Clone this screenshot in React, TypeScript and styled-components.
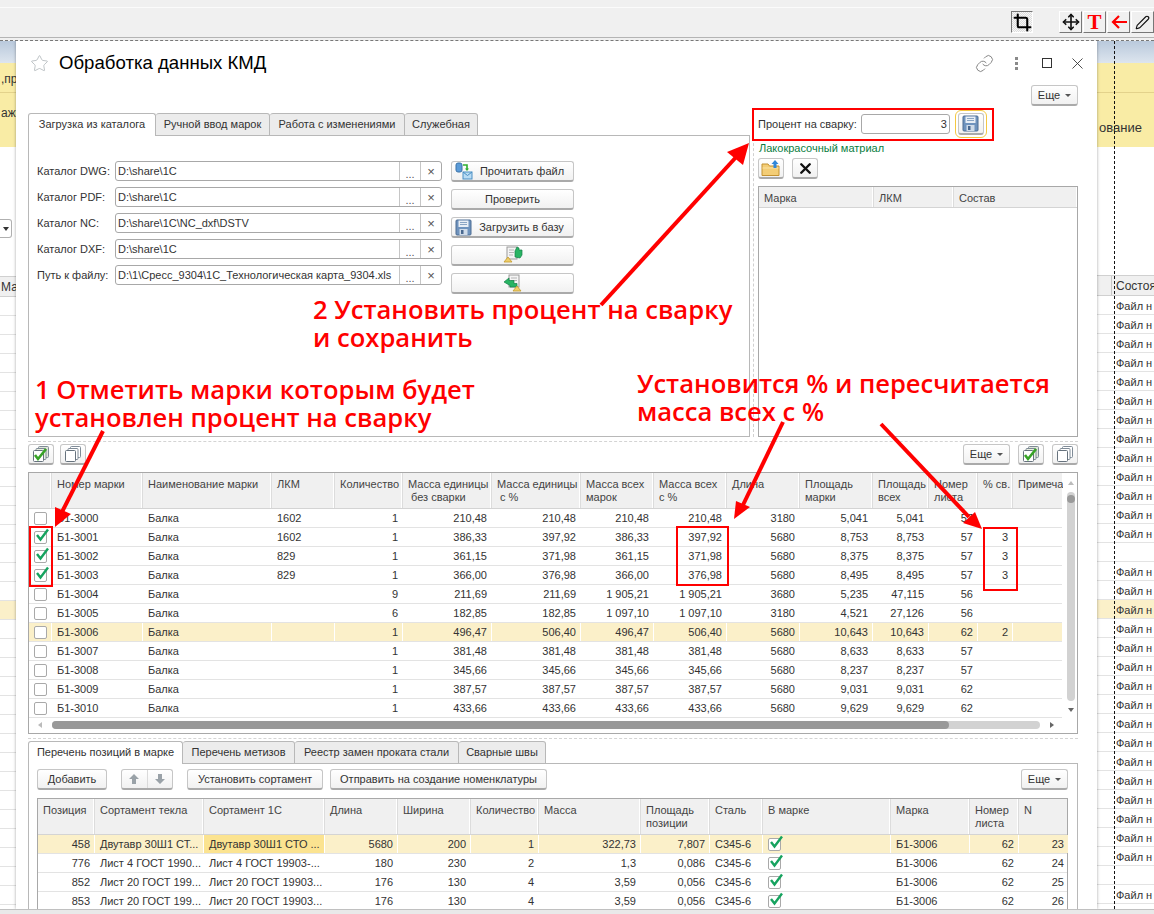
import React from 'react';
import styled, { createGlobalStyle } from 'styled-components';
import { Crop, Link, Move, Pen, Star, X } from 'lucide-react';

const GlobalStyle = createGlobalStyle`
  html, body {
    margin: 0;
    padding: 0;
    background: #fff;
  }
  * {
    box-sizing: border-box;
  }
`;

const MAIN_COLS = [23, 91, 129, 63, 68, 89, 89, 73, 73, 73, 73, 56, 49, 35, 50];
const POS_COLS = [57, 109, 121, 73, 73, 68, 102, 69, 53, 128, 79, 49, 50];
const LACQUER_COLS = [115, 80, 123];

const toTemplate = (cols: number[]) => cols.map(c => `${c}px`).join(' ');

const MAIN_HEAD = [
  '', 'Номер марки', 'Наименование марки', 'ЛКМ', 'Количество',
  'Масса единицы\n\u00a0без сварки', 'Масса единицы\n\u00a0с %', 'Масса всех\nмарок', 'Масса всех\nс %',
  'Длина', 'Площадь\nмарки', 'Площадь\nвсех', 'Номер\nлиста', '% св.', 'Примеча',
];

const POS_HEAD = [
  'Позиция', 'Сортамент текла', 'Сортамент 1С', 'Длина', 'Ширина', 'Количество', 'Масса',
  'Площадь\nпозиции', 'Сталь', 'В марке', 'Марка', 'Номер\nлиста', 'N',
];

type MarkRow = {
  name: string;
  lkm: string;
  qty: string;
  vals: string[];
  len: string;
  area: string;
  areaAll: string;
  sheet: string;
  pct: string;
  checked?: boolean;
  active?: boolean;
};

const mark = (
  name: string, lkm: string, qty: string, vals: string[], len: string,
  area: string, areaAll: string, sheet: string, pct = '', checked = false, active = false,
): MarkRow => ({ name, lkm, qty, vals, len, area, areaAll, sheet, pct, checked, active });

const MARKS: MarkRow[] = [
  mark('Б1-3000', '1602', '1', ['210,48', '210,48', '210,48', '210,48'], '3180', '5,041', '5,041', '57'),
  mark('Б1-3001', '1602', '1', ['386,33', '397,92', '386,33', '397,92'], '5680', '8,753', '8,753', '57', '3', true),
  mark('Б1-3002', '829', '1', ['361,15', '371,98', '361,15', '371,98'], '5680', '8,375', '8,375', '57', '3', true),
  mark('Б1-3003', '829', '1', ['366,00', '376,98', '366,00', '376,98'], '5680', '8,495', '8,495', '57', '3', true),
  mark('Б1-3004', '', '9', ['211,69', '211,69', '1 905,21', '1 905,21'], '3680', '5,235', '47,115', '56'),
  mark('Б1-3005', '', '6', ['182,85', '182,85', '1 097,10', '1 097,10'], '3180', '4,521', '27,126', '56'),
  mark('Б1-3006', '', '1', ['496,47', '506,40', '496,47', '506,40'], '5680', '10,643', '10,643', '62', '2', false, true),
  mark('Б1-3007', '', '1', ['381,48', '381,48', '381,48', '381,48'], '5680', '8,633', '8,633', '57'),
  mark('Б1-3008', '', '1', ['345,66', '345,66', '345,66', '345,66'], '5680', '8,237', '8,237', '57'),
  mark('Б1-3009', '', '1', ['387,57', '387,57', '387,57', '387,57'], '5680', '9,031', '9,031', '62'),
  mark('Б1-3010', '', '1', ['433,66', '433,66', '433,66', '433,66'], '5680', '9,629', '9,629', '62'),
];

const POSITIONS = [
  ['458', 'Двутавр 30Ш1 СТ...', 'Двутавр 30Ш1 СТО ...', '5680', '200', '1', '322,73', '7,807', '23'],
  ['776', 'Лист 4 ГОСТ 1990...', 'Лист 4 ГОСТ 19903-...', '180', '230', '2', '1,3', '0,086', '24'],
  ['852', 'Лист 20 ГОСТ 199...', 'Лист 20 ГОСТ 19903...', '176', '130', '4', '3,59', '0,056', '25'],
  ['853', 'Лист 20 ГОСТ 199...', 'Лист 20 ГОСТ 19903...', '176', '130', '4', '3,59', '0,056', '26'],
];

const FIELDS = [
  ['Каталог DWG:', 'D:\\share\\1C'],
  ['Каталог PDF:', 'D:\\share\\1C'],
  ['Каталог NC:', 'D:\\share\\1C\\NC_dxf\\DSTV'],
  ['Каталог DXF:', 'D:\\share\\1C'],
  ['Путь к файлу:', 'D:\\1\\Срecc_9304\\1C_Технологическая карта_9304.xls'],
];

const FloppyIcon = () => (
  <svg width="17" height="17" viewBox="0 0 17 17">
    <rect x="1" y="1" width="15" height="15" rx="1" fill="#6f93bd" stroke="#4d6c93" />
    <rect x="3.5" y="1.5" width="10" height="6.5" fill="#e8eef5" />
    <path d="M5 3.5h7M5 5.5h7" stroke="#8aa5c4" />
    <rect x="4.5" y="10" width="8" height="6" fill="#cfdbe9" />
    <rect x="6" y="11" width="2.5" height="4" fill="#49688f" />
  </svg>
);

const ReadFileIcon = () => (
  <svg width="18" height="18" viewBox="0 0 18 18">
    <rect x="1" y="1" width="6" height="9" rx="2" fill="#5b9bd8" stroke="#3b73a8" />
    <path d="M8 3h4v4" fill="none" stroke="#2eae2e" strokeWidth="1.6" />
    <path d="M10 6.5h4L12 9z" fill="#2eae2e" />
    <rect x="8" y="10" width="9" height="7" fill="#b9dcf4" stroke="#4a8fc4" />
    <path d="M8 10l4.5 3.5L17 10" fill="none" stroke="#4a8fc4" />
  </svg>
);

const DocUpIcon = () => (
  <svg width="20" height="18" viewBox="0 0 20 18">
    <rect x="4" y="1" width="10" height="12" fill="#f4f4f4" stroke="#9a9a9a" />
    <path d="M6 4h5M6 6.5h5M6 9h4" stroke="#b5b5b5" />
    <path d="M12 11V5l2-4 2 1v2h3v5l-2 3z" fill="#28b463" stroke="#148048" strokeWidth=".7" />
    <path d="M1 16l4-5 4 5z" fill="#f0cf6a" stroke="#c39a2c" strokeWidth=".8" />
  </svg>
);

const DocBackIcon = () => (
  <svg width="20" height="18" viewBox="0 0 20 18">
    <rect x="6" y="1" width="10" height="12" fill="#f4f4f4" stroke="#9a9a9a" />
    <path d="M8 4h6M8 6.5h6" stroke="#b5b5b5" />
    <path d="M1 8l5-4v2.5h5v3h3V13H7v-1.5z" fill="#28b463" stroke="#148048" strokeWidth=".7" />
    <path d="M10 17l4-5 4 5z" fill="#f0cf6a" stroke="#c39a2c" strokeWidth=".8" />
  </svg>
);

const FolderUpIcon = () => (
  <svg width="20" height="18" viewBox="0 0 20 18">
    <path d="M1 5h6l1.5 2H18v9.5H1z" fill="#f3cd76" stroke="#c39233" />
    <path d="M1.5 9h16" stroke="#fae2a4" />
    <path d="M14 1l3.5 4H15.500v4h-3V5H10.500z" fill="#2f86d8" />
  </svg>
);

const PagesIcon = ({ checked }: { checked?: boolean }) => (
  <svg width="18" height="18" viewBox="0 0 18 18">
    <rect x="6.500" y="1.500" width="10" height="11" rx="1" fill={checked ? '#dfe6d8' : '#fff'} stroke="#7f8b97" />
    <rect x="4" y="3.500" width="10" height="11" rx="1" fill={checked ? '#e9efe2' : '#fff'} stroke="#7f8b97" />
    <rect x="1.500" y="5.500" width="10" height="11" rx="1" fill="#fff" stroke="#66727d" />
    {checked && <path d="M3 10l3 4 8-10" fill="none" stroke="#37a326" strokeWidth="2.6" />}
  </svg>
);

const CheckMark = () => (
  <svg width="15" height="14" viewBox="0 0 15 14">
    <path d="M2 7l3.500 4.500L13 1.500" fill="none" stroke="#16a35f" strokeWidth="2.400" />
  </svg>
);

const ArrowGlyph = ({ down }: { down?: boolean }) => (
  <svg width="12" height="12" viewBox="0 0 12 12">
    <path d={down ? 'M4 1h4v5h3l-5 5-5-5h3z' : 'M4 11h4V6h3L6 1 1 6h3z'} fill="#9aa2a8" />
  </svg>
);

const SmallCheck = ({ checked }: { checked?: boolean }) => (
  <CheckBox>{checked && <CheckOverlay><CheckMark /></CheckOverlay>}</CheckBox>
);

const MainTable = () => (
  <Frame $height={262}>
    <BodyWrap>
      <Rows>
        <HeadRow $cols={toTemplate(MAIN_COLS)}>
          {MAIN_HEAD.map((h, i) => <HeadCell key={i}>{h}</HeadCell>)}
        </HeadRow>
        {MARKS.map(row => (
          <DataRow key={row.name} $cols={toTemplate(MAIN_COLS)}>
            <Cell $active={row.active}><SmallCheck checked={row.checked} /></Cell>
            <Cell $active={row.active}>{row.name}</Cell>
            <Cell $active={row.active}>Балка</Cell>
            <Cell $active={row.active}>{row.lkm}</Cell>
            <Cell $active={row.active} $right>{row.qty}</Cell>
            {row.vals.map((v, i) => <Cell key={i} $active={row.active} $right>{v}</Cell>)}
            <Cell $active={row.active} $right>{row.len}</Cell>
            <Cell $active={row.active} $right>{row.area}</Cell>
            <Cell $active={row.active} $right>{row.areaAll}</Cell>
            <Cell $active={row.active} $right>{row.sheet}</Cell>
            <Cell $active={row.active} $right>{row.pct}</Cell>
            <Cell $active={row.active} />
          </DataRow>
        ))}
      </Rows>
      <VScroll>
        <TriUp />
        <VTrack><VDot /></VTrack>
        <TriDown />
      </VScroll>
    </BodyWrap>
    <HScroll>
      <TriLeft />
      <HTrack><HThumb /></HTrack>
      <TriRight />
    </HScroll>
  </Frame>
);

const PositionsTable = () => (
  <Frame>
    <HeadRow $cols={toTemplate(POS_COLS)}>
      {POS_HEAD.map((h, i) => <HeadCell key={i}>{h}</HeadCell>)}
    </HeadRow>
    {POSITIONS.map((p, idx) => {
      const active = idx === 0;
      return (
        <DataRow key={p[0]} $cols={toTemplate(POS_COLS)}>
          <Cell $active={active} $right>{p[0]}</Cell>
          <Cell $active={active}>{p[1]}</Cell>
          <Cell $active={active} $current={active}>{p[2]}</Cell>
          <Cell $active={active} $right>{p[3]}</Cell>
          <Cell $active={active} $right>{p[4]}</Cell>
          <Cell $active={active} $right>{p[5]}</Cell>
          <Cell $active={active} $right>{p[6]}</Cell>
          <Cell $active={active} $right>{p[7]}</Cell>
          <Cell $active={active}>С345-6</Cell>
          <Cell $active={active}><SmallCheck checked /></Cell>
          <Cell $active={active}>Б1-3006</Cell>
          <Cell $active={active} $right>62</Cell>
          <Cell $active={active} $right>{p[8]}</Cell>
        </DataRow>
      );
    })}
  </Frame>
);

const LeftStrip = () => (
  <Strip $width={16}>
    <BlueBand />
    <YellowBand>
      <YellowRow $height={30} $pad={9}><StripText>,пр</StripText></YellowRow>
      <YellowRow $height={54} $pad={13}><StripText>аж</StripText></YellowRow>
    </YellowBand>
    <Gap $height={72} />
    <StubSelect><TriDownDark /></StubSelect>
    <Gap $height={38} />
    <StripHead><StripText>Ма</StripText></StripHead>
    {Array.from({ length: 33 }).map((_, i) => <StripRow key={i} $active={i === 16} />)}
  </Strip>
);

const RightStrip = () => (
  <Strip $width={57}>
    <GuideLine />
    <BlueBand />
    <YellowBand>
      <YellowRow $height={30} $pad={9} />
      <YellowRow $height={54} $pad={27}><StripText $large>ование</StripText></YellowRow>
    </YellowBand>
    <Gap $height={128} />
    <StripHead $cut><StripText>Состоян</StripText></StripHead>
    {Array.from({ length: 33 }).map((_, i) => (
      <StripRow key={i} $active={i === 16} $text>
        {i === 13 || i === 30 ? '' : 'Файл н'}
      </StripRow>
    ))}
  </Strip>
);

const Annotations = () => (
  <>
    <Arrows width="1154" height="914" viewBox="0 0 1154 914">
      <g stroke="#ff0000" strokeWidth="4" fill="none">
        <path d="M601 305L738 155" />
        <path d="M103 431L62 512" />
        <path d="M783 422L743 505" />
        <path d="M881 424L969 517" />
      </g>
      <g fill="#ff0000">
        <path d="M749 143L743 165 727 152z" />
        <path d="M55 527L55 507 71 514z" />
        <path d="M734 519L736 501 750 507z" />
        <path d="M982 529L963 523 975 512z" />
      </g>
    </Arrows>
    <Marker $left={752} $top={108} $width={242} $height={33} />
    <Marker $left={29} $top={526} $width={24} $height={61} />
    <Marker $left={676} $top={526} $width={53} $height={60} />
    <Marker $left={983} $top={527} $width={35} $height={64} />
    <Callout $left={313} $top={296}>2 Установить процент на сварку{'\n'}и сохранить</Callout>
    <Callout $left={35} $top={376}>1 Отметить марки которым будет{'\n'}установлен процент на сварку</Callout>
    <Callout $left={637} $top={370}>Установится % и пересчитается{'\n'}масса всех с %</Callout>
  </>
);

export default function App() {
  return (
    <Page>
      <GlobalStyle />
      <TopBar>
        <TopRule />
        <ToolRow>
          <CropTool><Crop size={19} strokeWidth={2.6} color="#000" /></CropTool>
          <ToolGroup>
            <ToolButton><Move size={18} strokeWidth={2.2} color="#111" /></ToolButton>
            <ToolButton><RedT>T</RedT></ToolButton>
            <ToolButton>
              <svg width="18" height="16" viewBox="0 0 18 16">
                <path d="M17 8H3M9 2L3 8l6 6" fill="none" stroke="#ff0000" strokeWidth="2.200" />
              </svg>
            </ToolButton>
            <ToolButton><Pen size={15} strokeWidth={1.800} color="#111" /></ToolButton>
          </ToolGroup>
        </ToolRow>
      </TopBar>
      <Middle>
        <LeftStrip />
        <Window>
          <TitleRow>
            <TitleGroup>
              <Star size={19} strokeWidth={1} color="#aeb4b8" />
              <Title>Обработка данных КМД</Title>
            </TitleGroup>
            <WindowIcons>
              <Link size={19} strokeWidth={1.200} color="#808080" />
              <Dots><i /><i /><i /></Dots>
              <Maximize />
              <CloseIcon size={19} strokeWidth={1.100} color="#333" />
            </WindowIcons>
          </TitleRow>
          <MoreRow>
            <MoreButton>Еще<Caret /></MoreButton>
          </MoreRow>
          <UpperSplit>
            <LeftPane>
              <TabStrip>
                <Tab $active $width={128}>Загрузка из каталога</Tab>
                <Tab $width={114}>Ручной ввод марок</Tab>
                <Tab $width={135}>Работа с изменениями</Tab>
                <Tab $width={73}>Служебная</Tab>
              </TabStrip>
              <TabPanel>
                <Fields>
                  {FIELDS.map(([label, value]) => (
                    <FieldRow key={label}>
                      <FieldLabel>{label}</FieldLabel>
                      <FieldBox>
                        <FieldValue>{value}</FieldValue>
                        <FieldAction $dots>...</FieldAction>
                        <FieldAction>×</FieldAction>
                      </FieldBox>
                    </FieldRow>
                  ))}
                </Fields>
                <Actions>
                  <ActionButton $shift><ReadFileIcon /><span>Прочитать файл</span></ActionButton>
                  <ActionButton><span>Проверить</span></ActionButton>
                  <ActionButton $shift><FloppyIcon /><span>Загрузить в базу</span></ActionButton>
                  <ActionButton><DocUpIcon /></ActionButton>
                  <ActionButton><DocBackIcon /></ActionButton>
                </Actions>
              </TabPanel>
            </LeftPane>
            <RightPane>
              <PercentRow>
                <FieldLabel $auto>Процент на сварку:</FieldLabel>
                <PercentInput>3</PercentInput>
                <SaveButton><FloppyIcon /></SaveButton>
              </PercentRow>
              <GreenLabel>Лакокрасочный матриал</GreenLabel>
              <IconRow>
                <IconButton><FolderUpIcon /></IconButton>
                <IconButton><X size={17} strokeWidth={3.400} color="#111" /></IconButton>
              </IconRow>
              <Frame $grow>
                <HeadRow $cols={toTemplate(LACQUER_COLS)} $short>
                  <HeadCell>Марка</HeadCell>
                  <HeadCell>ЛКМ</HeadCell>
                  <HeadCell>Состав</HeadCell>
                </HeadRow>
              </Frame>
            </RightPane>
          </UpperSplit>
          <DashRule $top={4} />
          <ListToolbar>
            <ToolGap $gap={6}>
              <IconButton><PagesIcon checked /></IconButton>
              <IconButton><PagesIcon /></IconButton>
            </ToolGap>
            <ToolGap $gap={8}>
              <MoreButton>Еще<Caret /></MoreButton>
              <IconButton><PagesIcon checked /></IconButton>
              <IconButton><PagesIcon /></IconButton>
            </ToolGap>
          </ListToolbar>
          <MainTable />
          <DashRule $top={4} />
          <BottomTabs>
            <Tab $active $width={155}>Перечень позиций в марке</Tab>
            <Tab $width={112}>Перечень метизов</Tab>
            <Tab $width={164}>Реестр замен проката стали</Tab>
            <Tab $width={87}>Сварные швы</Tab>
          </BottomTabs>
          <BottomPanel>
            <ButtonsRow>
              <ToolGap $gap={7}>
                <TextButton $width={70}>Добавить</TextButton>
                <ArrowGroup>
                  <ArrowCell><ArrowGlyph /></ArrowCell>
                  <ArrowCell $split><ArrowGlyph down /></ArrowCell>
                </ArrowGroup>
                <TextButton $width={136}>Установить сортамент</TextButton>
                <TextButton $width={217}>Отправить на создание номенклатуры</TextButton>
              </ToolGap>
              <MoreButton>Еще<Caret /></MoreButton>
            </ButtonsRow>
            <PositionsTable />
          </BottomPanel>
        </Window>
        <RightStrip />
      </Middle>
      <BottomBar />
      <Annotations />
    </Page>
  );
}

const UI_FONT = '"Liberation Sans", Arial, sans-serif';

const Page = styled.div`
  position: relative;
  width: 1154px;
  height: 914px;
  display: flex;
  flex-direction: column;
  overflow: hidden;
  background: #fff;
  font-family: ${UI_FONT};
  font-size: 11px;
  color: #333;
`;

const TopBar = styled.div`
  height: 41px;
  flex: none;
  background: #f0f0f0;
  border-bottom: 1px dashed #777;
  display: flex;
  flex-direction: column;
`;

const TopRule = styled.div`
  height: 8px;
  flex: none;
  border-bottom: 1px solid #fbfbfb;
`;

const ToolRow = styled.div`
  flex: 1;
  display: flex;
  justify-content: flex-end;
  align-items: flex-start;
  gap: 26px;
  padding-top: 3px;
  border-bottom: 1px solid #b4b4b4;
  margin-bottom: 2px;
`;

const CropTool = styled.div`
  width: 22px;
  height: 22px;
  display: flex;
  align-items: center;
  justify-content: center;
  background: repeating-conic-gradient(#dcdcdc 0 25%, #f8f8f8 0 50%) 0 0 / 2px 2px;
  border: 1px solid #fff;
  border-top-color: #777;
  border-left-color: #777;
`;

const ToolGroup = styled.div`
  display: flex;
  gap: 1px;
`;

const ToolButton = styled.div`
  width: 23px;
  height: 22px;
  display: flex;
  align-items: center;
  justify-content: center;
  background: #f0f0f0;
  border: 1px solid #fff;
  border-right-color: #777;
  border-bottom-color: #777;
`;

const RedT = styled.span`
  font-family: "Liberation Serif", serif;
  font-weight: 700;
  font-size: 21px;
  line-height: 1;
  color: #ff0000;
`;

const Middle = styled.div`
  flex: 1;
  min-height: 0;
  display: flex;
  overflow: hidden;
`;

const Strip = styled.div<{ $width: number }>`
  position: relative;
  width: ${p => p.$width}px;
  flex: none;
  display: flex;
  flex-direction: column;
  overflow: hidden;
`;

const GuideLine = styled.div`
  position: absolute;
  top: 0;
  bottom: 0;
  left: 17px;
  border-left: 1px dashed #111;
  z-index: 2;
`;

const BlueBand = styled.div`
  height: 22px;
  flex: none;
  background: linear-gradient(#b9c9dc, #dde5ee);
`;

const YellowBand = styled.div`
  flex: none;
  background: #f9eca5;
`;

const YellowRow = styled.div<{ $height: number; $pad: number }>`
  height: ${p => p.$height}px;
  padding-top: ${p => p.$pad}px;
  border-bottom: 1px solid #e3d28b;
  white-space: nowrap;
  &:last-child {
    border-bottom: 0;
  }
`;

const StripText = styled.span<{ $large?: boolean }>`
  display: block;
  overflow: hidden;
  white-space: nowrap;
  padding-left: ${p => (p.$large ? '2px' : '1px')};
  font-size: ${p => (p.$large ? '13px' : '12px')};
`;

const Gap = styled.div<{ $height: number }>`
  height: ${p => p.$height}px;
  flex: none;
`;

const StubSelect = styled.div`
  width: 12px;
  height: 19px;
  flex: none;
  display: flex;
  align-items: center;
  justify-content: center;
  border: 1px solid #b0b0b0;
  border-left: 0;
  border-radius: 0 3px 3px 0;
`;

const StripHead = styled.div<{ $cut?: boolean }>`
  position: relative;
  height: 21px;
  flex: none;
  display: flex;
  align-items: center;
  background: #f0f0f0;
  border-top: 1px solid #d0d0d0;
  border-bottom: 1px solid #d0d0d0;
  padding-left: ${p => (p.$cut ? '18px' : '0')};
  &::before {
    content: '';
    display: ${p => (p.$cut ? 'block' : 'none')};
    position: absolute;
    left: 14px;
    top: 0;
    bottom: 0;
    border-left: 1px solid #c8c8c8;
  }
`;

const StripRow = styled.div<{ $active?: boolean; $text?: boolean }>`
  height: 19px;
  flex: none;
  display: flex;
  align-items: center;
  padding: 1px 0 0 ${p => (p.$text ? '19px' : '0')};
  font-size: 11px;
  white-space: nowrap;
  background: ${p => (p.$active ? '#fbf0c9' : '#fff')};
  border-bottom: 1px solid #e3e3e3;
`;

const BottomBar = styled.div`
  height: 5px;
  flex: none;
  background: #e9e9e9;
  border-top: 1px solid #c0c0c0;
`;

const Window = styled.div`
  flex: 1;
  min-width: 0;
  display: flex;
  flex-direction: column;
  padding: 0 19px 0 12px;
  background: #fff;
  box-shadow: 0 0 3px rgba(0, 0, 0, 0.35);
  z-index: 1;
  overflow: hidden;
`;

const TitleRow = styled.div`
  height: 44px;
  flex: none;
  display: flex;
  justify-content: space-between;
  align-items: center;
`;

const TitleGroup = styled.div`
  display: flex;
  align-items: center;
  gap: 10px;
  padding-left: 2px;
`;

const Title = styled.div`
  font-size: 18.600px;
  color: #000;
`;

const WindowIcons = styled.div`
  display: flex;
  align-items: center;
  gap: 21px;
  margin-right: -9px;
`;

const Dots = styled.div`
  display: flex;
  flex-direction: column;
  gap: 2px;
  i {
    width: 3px;
    height: 3px;
    background: #8a8a8a;
  }
`;

const Maximize = styled.div`
  width: 10px;
  height: 10px;
  margin-left: 3px;
  border: 1px solid #333;
`;

const CloseIcon = styled(X)`
  margin-left: -5px;
`;

const MoreRow = styled.div`
  height: 21px;
  flex: none;
  display: flex;
  justify-content: flex-end;
`;

const ButtonBase = styled.div`
  display: flex;
  align-items: center;
  justify-content: center;
  background: linear-gradient(#fff, #f1f1f1);
  border: 1px solid #c6c6c6;
  border-bottom: 2px solid #aaa;
  border-radius: 3px;
  color: #333;
  white-space: nowrap;
`;

const MoreButton = styled(ButtonBase)`
  width: 47px;
  height: 21px;
  gap: 5px;
`;

const Caret = styled.span`
  width: 0;
  height: 0;
  border-left: 3px solid transparent;
  border-right: 3px solid transparent;
  border-top: 3px solid #555;
`;

const UpperSplit = styled.div`
  height: 324px;
  margin-top: 7px;
  flex: none;
  display: flex;
`;

const LeftPane = styled.div`
  width: 722px;
  flex: none;
  display: flex;
  flex-direction: column;
`;

const TabStrip = styled.div`
  display: flex;
  height: 22px;
  flex: none;
`;

const Tab = styled.div<{ $active?: boolean; $width: number }>`
  position: relative;
  width: ${p => p.$width}px;
  height: 23px;
  padding-top: 4px;
  text-align: center;
  background: ${p => (p.$active ? '#fff' : '#ececec')};
  border: 1px solid #b8b8b8;
  border-left-width: ${p => (p.$active ? '1px' : '0')};
  border-bottom: ${p => (p.$active ? '0' : '1px solid #b8b8b8')};
  border-radius: 3px 3px 0 0;
  white-space: nowrap;
`;

const TabPanel = styled.div`
  flex: 1;
  display: flex;
  gap: 9px;
  padding: 25px 0 0 8px;
  border: 1px solid #b8b8b8;
`;

const Fields = styled.div`
  width: 405px;
  flex: none;
  display: flex;
  flex-direction: column;
  gap: 6px;
`;

const FieldRow = styled.div`
  height: 20px;
  display: flex;
  align-items: center;
`;

const FieldLabel = styled.div<{ $auto?: boolean }>`
  width: ${p => (p.$auto ? 'auto' : '78px')};
  flex: none;
  white-space: nowrap;
`;

const FieldBox = styled.div`
  flex: 1;
  height: 20px;
  display: flex;
  border: 1px solid #a8a8a8;
  border-radius: 3px;
  color: #333;
`;

const FieldValue = styled.div`
  flex: 1;
  min-width: 0;
  padding: 3px 0 0 2px;
  white-space: nowrap;
  overflow: hidden;
`;

const FieldAction = styled.div<{ $dots?: boolean }>`
  width: 21px;
  flex: none;
  display: flex;
  align-items: ${p => (p.$dots ? 'flex-end' : 'center')};
  justify-content: center;
  border-left: 1px solid #c6c6c6;
  color: #555;
  font-size: ${p => (p.$dots ? '11px' : '13px')};
`;

const Actions = styled.div`
  width: 123px;
  flex: none;
  display: flex;
  flex-direction: column;
  gap: 7px;
`;

const ActionButton = styled(ButtonBase)<{ $shift?: boolean }>`
  height: 21px;
  gap: 7px;
  padding-right: ${p => (p.$shift ? '6px' : '0')};
`;

const RightPane = styled.div`
  width: 320px;
  flex: none;
  margin-left: 8px;
  display: flex;
  flex-direction: column;
  position: relative;
  &::before {
    content: '';
    position: absolute;
    top: 0;
    bottom: 0;
    left: -5px;
    border-left: 1px dashed #d0d0d0;
  }
`;

const PercentRow = styled.div`
  height: 22px;
  flex: none;
  display: flex;
  align-items: center;
`;

const PercentInput = styled.div`
  width: 89px;
  height: 20px;
  margin-left: 4px;
  padding: 3px 2px 0 0;
  text-align: right;
  border: 1px solid #a8a8a8;
  border-radius: 3px;
`;

const SaveButton = styled(ButtonBase)`
  width: 26px;
  height: 22px;
  margin-left: 8px;
  outline: 1px solid #f5c842;
  outline-offset: 2px;
`;

const GreenLabel = styled.div`
  height: 14px;
  flex: none;
  margin-top: 7px;
  padding-left: 1px;
  color: #0a7d3f;
  white-space: nowrap;
`;

const IconRow = styled.div`
  height: 21px;
  flex: none;
  margin-top: 2px;
  display: flex;
  gap: 8px;
`;

const IconButton = styled(ButtonBase)`
  width: 26px;
  height: 21px;
`;

const Frame = styled.div<{ $height?: number; $grow?: boolean }>`
  ${p => (p.$height ? `height: ${p.$height}px;` : '')}
  ${p => (p.$grow ? 'flex: 1; margin-top: 7px;' : 'flex: none;')}
  display: flex;
  flex-direction: column;
  border: 1px solid #a8a8a8;
`;

const BodyWrap = styled.div`
  flex: 1;
  min-height: 0;
  display: flex;
`;

const Rows = styled.div`
  flex: 1;
  min-width: 0;
`;

const HeadRow = styled.div<{ $cols: string; $short?: boolean }>`
  display: grid;
  grid-template-columns: ${p => p.$cols};
  height: ${p => (p.$short ? '21px' : '36px')};
  background: #f0f0f0;
  border-bottom: 1px solid #d4d4d4;
`;

const HeadCell = styled.div`
  padding: 5px 2px 0 5px;
  line-height: 13px;
  white-space: pre;
  overflow: hidden;
  color: #444;
  border-right: 1px solid #dcdcdc;
  box-shadow: inset -1px 0 0 #fff;
  &:last-child {
    border-right: 0;
  }
`;

const DataRow = styled.div<{ $cols: string }>`
  display: grid;
  grid-template-columns: ${p => p.$cols};
  height: 19px;
  border-bottom: 1px solid #e3e3e3;
`;

const Cell = styled.div<{ $right?: boolean; $active?: boolean; $current?: boolean }>`
  display: flex;
  align-items: center;
  justify-content: ${p => (p.$right ? 'flex-end' : 'flex-start')};
  padding: ${p => (p.$right ? '0 4px 0 0' : '0 0 0 5px')};
  white-space: nowrap;
  overflow: hidden;
  background: ${p => (p.$current ? '#fbe390' : p.$active ? '#fbf0c9' : 'transparent')};
  border-right: 1px solid ${p => (p.$active ? '#fff' : 'transparent')};
  color: #333;
`;

const CheckBox = styled.div`
  position: relative;
  width: 13px;
  height: 13px;
  flex: none;
  border: 1px solid #a9a9a9;
  border-radius: 2px;
  background: #fff;
`;

const CheckOverlay = styled.div`
  position: absolute;
  left: 0;
  top: -4px;
  display: flex;
`;

const VScroll = styled.div`
  width: 15px;
  flex: none;
  display: flex;
  flex-direction: column;
  align-items: center;
  padding: 8px 0 5px 2px;
`;

const VTrack = styled.div`
  flex: 1;
  width: 8px;
  margin: 7px 0;
  padding-top: 3px;
  border-radius: 4px;
  background: #d2d2d2;
`;

const VDot = styled.div`
  width: 8px;
  height: 8px;
  border-radius: 50%;
  background: #9a9a9a;
`;

const HScroll = styled.div`
  height: 16px;
  flex: none;
  display: flex;
  align-items: center;
  padding: 0 23px 0 9px;
`;

const HTrack = styled.div`
  flex: 1;
  height: 8px;
  margin: 0 10px;
  border-radius: 4px;
  background: #d2d2d2;
`;

const HThumb = styled.div`
  width: 897px;
  height: 8px;
  border-radius: 4px;
  background: #999;
`;

const TriUp = styled.span`
  border-left: 3px solid transparent;
  border-right: 3px solid transparent;
  border-bottom: 4px solid #bbb;
`;

const TriDown = styled.span`
  border-left: 3px solid transparent;
  border-right: 3px solid transparent;
  border-top: 4px solid #666;
`;

const TriDownDark = styled(TriDown)`
  border-top-color: #333;
`;

const TriLeft = styled.span`
  border-top: 3px solid transparent;
  border-bottom: 3px solid transparent;
  border-right: 4px solid #bbb;
`;

const TriRight = styled.span`
  border-top: 3px solid transparent;
  border-bottom: 3px solid transparent;
  border-left: 4px solid #666;
`;

const DashRule = styled.div<{ $top: number }>`
  flex: none;
  margin-top: ${p => p.$top}px;
  height: 1px;
  border-top: 1px dashed #d4d4d4;
`;

const ListToolbar = styled.div`
  flex: none;
  height: 21px;
  margin: 2px 0 7px;
  display: flex;
  justify-content: space-between;
`;

const ToolGap = styled.div<{ $gap: number }>`
  display: flex;
  gap: ${p => p.$gap}px;
`;

const BottomTabs = styled(TabStrip)`
  margin-top: 2px;
  position: relative;
  z-index: 1;
`;

const BottomPanel = styled.div`
  flex: 1;
  min-height: 0;
  padding: 5px 9px 0 8px;
  border: 1px solid #b8b8b8;
  border-bottom: 0;
  overflow: hidden;
`;

const ButtonsRow = styled.div`
  height: 21px;
  margin-bottom: 8px;
  display: flex;
  justify-content: space-between;
`;

const TextButton = styled(ButtonBase)<{ $width: number }>`
  width: ${p => p.$width}px;
  height: 21px;
`;

const ArrowGroup = styled(ButtonBase)`
  width: 52px;
  height: 21px;
  margin: 0 7px;
`;

const ArrowCell = styled.div<{ $split?: boolean }>`
  flex: 1;
  height: 100%;
  display: flex;
  align-items: center;
  justify-content: center;
  border-left: ${p => (p.$split ? '1px solid #dadada' : '0')};
`;

const Arrows = styled.svg`
  position: absolute;
  left: 0;
  top: 0;
  z-index: 5;
  pointer-events: none;
`;

const Marker = styled.div<{ $left: number; $top: number; $width: number; $height: number }>`
  position: absolute;
  left: ${p => p.$left}px;
  top: ${p => p.$top}px;
  width: ${p => p.$width}px;
  height: ${p => p.$height}px;
  border: 2px solid #ff0000;
  z-index: 5;
`;

const Callout = styled.div<{ $left: number; $top: number }>`
  position: absolute;
  left: ${p => p.$left}px;
  top: ${p => p.$top}px;
  z-index: 6;
  white-space: pre;
  font-family: "Open Sans", sans-serif;
  font-weight: 600;
  font-size: 25.600px;
  line-height: 28px;
  color: #ff0000;
`;
